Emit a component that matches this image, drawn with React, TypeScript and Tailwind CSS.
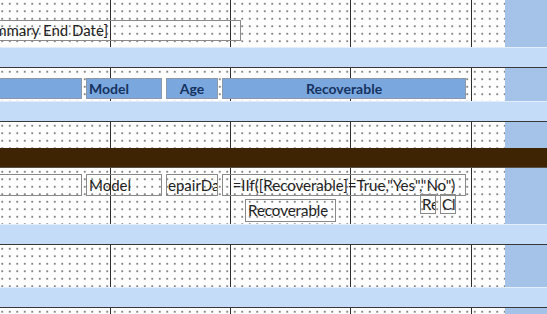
import React from 'react';

const FONT = "font-['Lato','Liberation_Sans',sans-serif]";

function Dotted({ h, children }: { h: string; children?: React.ReactNode }) {
  return (
    <div className={`relative flex ${h} overflow-hidden`}>
      <div className="flex w-[505px] shrink-0 bg-white bg-[radial-gradient(circle,#4a4a4a_0.55px,transparent_0.9px)] bg-[length:7.5px_7.5px] bg-[position:-1.5px_0px]">
        <div className="w-[111px] border-r border-[#2e2e2e]" />
        <div className="w-[120px] border-r border-[#2e2e2e]" />
        <div className="w-[120px] border-r border-[#2e2e2e]" />
        <div className="w-[121px] border-r border-[#2e2e2e]" />
        <div className="flex-1" />
      </div>
      <div className="flex-1 bg-[#a5c3e9]" />
      {/* controls sit on the design canvas, above the grid */}
      {children && <div className="absolute inset-0">{children}</div>}
    </div>
  );
}

function Band() {
  return <div className="h-[21px] border-t border-t-[#e3eefc] border-b border-b-[#383838] bg-[#c5dcf8]" />;
}

function Label({ className, children }: { className: string; children?: React.ReactNode }) {
  return (
    <div
      className={`flex h-[21px] shrink-0 items-center border border-[#8d99ab] bg-[#7ba7df] text-[14px] font-bold text-[#16335f] ${className}`}
    >
      {children}
    </div>
  );
}

function Field({ className, children }: { className: string; children?: React.ReactNode }) {
  return (
    <div
      className={`flex shrink-0 items-center overflow-hidden whitespace-nowrap border border-[#8a8a8a] text-[15px] leading-none text-[#222] ${className}`}
    >
      {children}
    </div>
  );
}

export default function App() {
  return (
    <div className={`h-[314px] w-[547px] overflow-hidden bg-white ${FONT}`}>
      {/* Report header */}
      <Dotted h="h-[47px]">
        <div className="ml-[-40px] mt-[20px] flex h-[21px] w-[281px] items-center justify-end border border-[#8a8a8a] pr-[132px]">
          <span className="whitespace-nowrap text-[15px] text-[#222]">[Summary End Date]</span>
        </div>
      </Dotted>
      <Band />

      {/* Page header labels */}
      <Dotted h="h-[33px]">
        <div className="ml-[-10px] mt-[10px] flex gap-[4px]">
          <Label className="w-[92px]" />
          <Label className="w-[76px] pl-[2px]">Model</Label>
          <Label className="w-[52px] justify-center">Age</Label>
          <Label className="w-[244px] justify-center">Recoverable</Label>
        </div>
      </Dotted>
      <Band />

      <Dotted h="h-[26px]" />
      <div className="h-[20px] border-b border-[#5a5046] bg-[#3e2402]" />

      {/* Detail */}
      <Dotted h="h-[56px]">
        <div className="ml-[-10px] mt-[6px] flex gap-[4px]">
          <Field className="h-[22px] w-[92px]" />
          <Field className="h-[22px] w-[76px] pl-[2px]">Model</Field>
          <Field className="h-[22px] w-[52px] pl-[1px]">epairDa</Field>
          <Field className="h-[22px] w-[244px] justify-center">=IIf([Recoverable]=True,"Yes","No")</Field>
        </div>
        <div className="ml-[245px] flex items-start">
          <Field className="mt-[3px] h-[23px] w-[91px] pl-[2px]">Recoverable</Field>
          <div className="ml-[84px] flex gap-[4px]">
            <Field className="mt-[-2px] h-[20px] w-[16px] pl-[1px]">Re</Field>
            <Field className="mt-[-2px] h-[20px] w-[16px] pl-[1px]">Cl</Field>
          </div>
        </div>
      </Dotted>
      <Band />

      <Dotted h="h-[42px]" />
      <Band />
      <Dotted h="h-[20px]" />
    </div>
  );
}
